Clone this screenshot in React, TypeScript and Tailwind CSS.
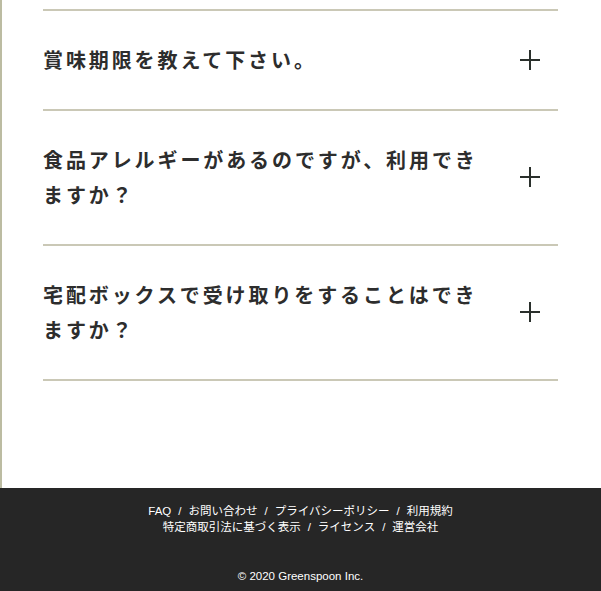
import React from "react";

const items = [
  "賞味期限を教えて下さい。",
  "食品アレルギーがあるのですが、利用できますか？",
  "宅配ボックスで受け取りをすることはできますか？",
];

function Plus() {
  return (
    <svg width="20" height="20" viewBox="0 0 20 20" className="block">
      <path d="M10 0V20M0 10H20" stroke="#2a302c" strokeWidth="2" fill="none" />
    </svg>
  );
}

const Sep = () => <span className="mx-[7px]">/</span>;

export default function App() {
  return (
    <div className="w-[601px] bg-white">
      <div className="h-[488px] border-l-2 border-[#bcbca2] pt-[9px]">
        <div className="ml-[41px] w-[515px] border-t-2 border-[#cac8b6]">
          {items.map((t) => (
            <div
              key={t}
              className="flex items-center justify-between border-b-2 border-[#cac8b6] py-[31px]"
            >
              <p className="w-[446px] font-['Noto_Sans_CJK_JP',sans-serif] text-[20px] font-bold leading-[35.5px] tracking-[2.9px] text-[#2d2d2d]">
                {t}
              </p>
              <div className="mr-[18px]">
                <Plus />
              </div>
            </div>
          ))}
        </div>
      </div>
      <footer className="h-[103px] bg-[#262626] pt-[15px] text-center font-['Liberation_Sans','Noto_Sans_CJK_JP',sans-serif] text-[11.5px] leading-[16px] text-white">
        <div>
          FAQ<Sep />お問い合わせ<Sep />プライバシーポリシー<Sep />利用規約
        </div>
        <div>
          特定商取引法に基づく表示<Sep />ライセンス<Sep />運営会社
        </div>
        <div className="mt-[33px]">© 2020 Greenspoon Inc.</div>
      </footer>
    </div>
  );
}
